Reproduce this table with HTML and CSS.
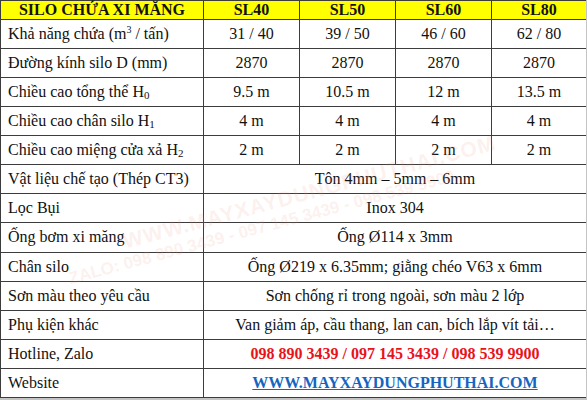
FILE: index.html
```html
<!DOCTYPE html>
<html lang="vi">
<head>
<meta charset="utf-8">
<title>Silo chứa xi măng</title>
<link rel="stylesheet" href="styles.css">
</head>
<body>
<div class="sheet">
<table class="spec">
  <colgroup>
    <col class="c-label"><col class="c-val"><col class="c-val"><col class="c-val"><col class="c-last">
  </colgroup>
  <thead>
    <tr class="head">
      <th>SILO CHỨA XI MĂNG</th><th>SL40</th><th>SL50</th><th>SL60</th><th>SL80</th>
    </tr>
  </thead>
  <tbody>
    <tr><td class="lbl">Khả năng chứa (m<sup>3</sup> / tấn)</td><td>31 / 40</td><td>39 / 50</td><td>46 / 60</td><td>62 / 80</td></tr>
    <tr><td class="lbl">Đường kính silo D (mm)</td><td>2870</td><td>2870</td><td>2870</td><td>2870</td></tr>
    <tr><td class="lbl">Chiều cao tổng thể H<sub>0</sub></td><td>9.5 m</td><td>10.5 m</td><td>12 m</td><td>13.5 m</td></tr>
    <tr><td class="lbl">Chiều cao chân silo H<sub>1</sub></td><td>4 m</td><td>4 m</td><td>4 m</td><td>4 m</td></tr>
    <tr><td class="lbl">Chiều cao miệng cửa xả H<sub>2</sub></td><td>2 m</td><td>2 m</td><td>2 m</td><td>2 m</td></tr>
    <tr><td class="lbl">Vật liệu chế tạo (Thép CT3)</td><td colspan="4">Tôn 4mm – 5mm – 6mm</td></tr>
    <tr><td class="lbl">Lọc Bụi</td><td colspan="4">Inox 304</td></tr>
    <tr><td class="lbl">Ống bơm xi măng</td><td colspan="4">Ống Ø114 x 3mm</td></tr>
    <tr><td class="lbl">Chân silo</td><td colspan="4">Ống Ø219 x 6.35mm; giằng chéo V63 x 6mm</td></tr>
    <tr><td class="lbl">Sơn màu theo yêu cầu</td><td colspan="4">Sơn chống rỉ trong ngoài, sơn màu 2 lớp</td></tr>
    <tr><td class="lbl">Phụ kiện khác</td><td colspan="4">Van giảm áp, cầu thang, lan can, bích lắp vít tải…</td></tr>
    <tr><td class="lbl">Hotline, Zalo</td><td colspan="4" class="hot">098 890 3439 / 097 145 3439 / 098 539 9900</td></tr>
    <tr><td class="lbl">Website</td><td colspan="4" class="web">WWW.MAYXAYDUNGPHUTHAI.COM</td></tr>
  </tbody>
</table>
<div class="watermark">
  <div class="wm1">WWW.MAYXAYDUNGPHUTHAI.COM</div>
  <div class="wm2">ZALO: 098 890 3439 - 097 145 3439 - 098 539 9900</div>
</div>
</div>
</body>
</html>
```
FILE: styles.css
```css
html, body {
  margin: 0;
  padding: 0;
  background: #c4c4c4;
}
.sheet {
  position: relative;
  width: 586px;
  height: 398px;
  background: #fff;
  overflow: hidden;
}
.spec {
  width: 586px;
  height: 398px;
  border-collapse: collapse;
  table-layout: fixed;
  font-family: "Liberation Serif", "Times New Roman", serif;
  font-size: 16px;
  color: #111;
  position: relative;
  z-index: 1;
}
.c-label { width: 203px; }
.c-val { width: 96px; }
.c-last { width: 95px; }
.spec th, .spec td {
  border: 1px solid #3c3c3c;
  padding: 0;
  text-align: center;
  vertical-align: middle;
  line-height: 18px;
  white-space: nowrap;
}
.head th {
  background: #ffff00;
  font-weight: bold;
  font-size: 16px;
}
.spec td.lbl {
  text-align: left;
  padding-left: 7px;
}
.spec sup {
  font-size: 10px;
  line-height: 0;
  vertical-align: 6px;
}
.spec sub {
  font-size: 11px;
  line-height: 0;
  vertical-align: -2px;
}
.hot {
  color: #e8121a;
  font-weight: bold;
}
.web {
  color: #1565c0;
  font-weight: bold;
  text-decoration: underline;
}
.watermark {
  position: absolute;
  left: 72px;
  bottom: 108px;
  transform: rotate(-15deg);
  transform-origin: left bottom;
  z-index: 2;
  pointer-events: none;
  font-family: "Liberation Sans", Arial, sans-serif;
  font-weight: bold;
  color: rgba(235, 150, 120, 0.15);
  white-space: nowrap;
  line-height: 22px;
}
.wm1 {
  font-size: 21px;
  letter-spacing: 1px;
  margin-left: 62px;
}
.wm2 {
  font-size: 17px;
}
```
